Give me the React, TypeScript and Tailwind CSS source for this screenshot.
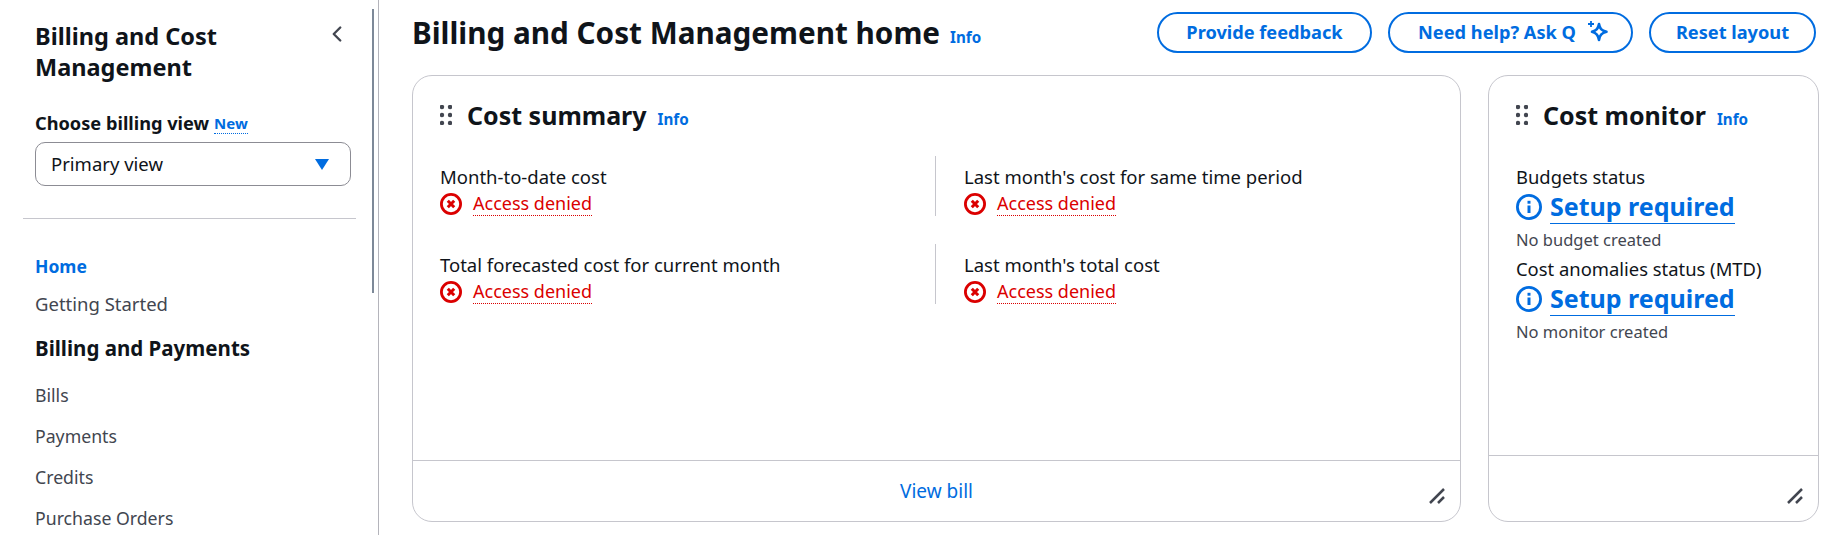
import { ChevronLeft } from "lucide-react";

const FONT = "font-['Noto_Sans','Open_Sans',sans-serif]";

const navLinks = ["Bills", "Payments", "Credits", "Purchase Orders"];

function ErrorIcon() {
    return (
        <svg viewBox="0 0 22 22" className="w-[22px] h-[22px] shrink-0" fill="none" stroke="#db0000">
            <circle cx="11" cy="11" r="9.600" strokeWidth="2.800" />
            <path d="M7.800 7.800l6.400 6.400M14.200 7.800l-6.400 6.400" strokeWidth="3" />
        </svg>
    );
}

function InfoIcon() {
    return (
        <svg viewBox="0 0 26 26" className="w-[26px] h-[26px] shrink-0" fill="none" stroke="#006ce0">
            <circle cx="13" cy="13" r="11.600" strokeWidth="2.800" />
            <path d="M13 11.500v7.500" strokeWidth="3" />
            <path d="M13 6.800v2.900" strokeWidth="3" />
        </svg>
    );
}

function Sparkle() {
    return (
        <svg viewBox="0 0 22 22" className="w-[22px] h-[22px] shrink-0 -mt-[2px]" fill="none" stroke="#006ce0" strokeWidth="2.600" strokeLinejoin="round">
            <path d="M12 3c.8 4.700 2.300 6.300 7.500 7.800-5.200 1.500-6.700 3.100-7.500 8.200-.9-5.100-2.400-6.700-7-8.200 4.600-1.500 6.100-3.100 7-7.800z" />
            <path d="M4 0v6M1 3h6" strokeWidth="1.800" />
        </svg>
    );
}

function Grip() {
    return (
        <svg viewBox="0 0 12 20" className="w-3 h-5 shrink-0" fill="#424650">
            <circle cx="2" cy="2" r="2.200" />
            <circle cx="10" cy="2" r="2.200" />
            <circle cx="2" cy="10" r="2.200" />
            <circle cx="10" cy="10" r="2.200" />
            <circle cx="2" cy="18" r="2.200" />
            <circle cx="10" cy="18" r="2.200" />
        </svg>
    );
}

function ResizeHandle() {
    return (
        <svg viewBox="0 0 16 16" className="absolute right-[15px] bottom-[17px] w-4 h-4" fill="none" stroke="#424650" strokeWidth="2.500">
            <path d="M1 15L15 1M9 15l6-6" />
        </svg>
    );
}

function Metric({ label, divider }: { label: string; divider?: boolean }) {
    return (
        <div className={divider ? "border-l border-[#c6c6cd] pl-[28px] h-[60px]" : "h-[60px]"}>
            <div className="text-[18.500px] leading-[24px] text-[#0f141a] mt-[9px]">{label}</div>
            <div className="flex items-center gap-[11px] mt-[3px] h-[24px]">
                <ErrorIcon />
                <span className="text-[18px] leading-[23px] text-[#db0000] border-b border-dotted border-[#db0000]">
                    Access denied
                </span>
            </div>
        </div>
    );
}

function Setup({ label, note }: { label: string; note: string }) {
    return (
        <div>
            <div className="text-[18.400px] leading-[24px] text-[#0f141a]">{label}</div>
            <div className="flex items-center gap-[8px] mt-[1px] h-[34px]">
                <InfoIcon />
                <span className="text-[25px] leading-[33px] font-bold text-[#006ce0] border-b border-[#006ce0]">
                    Setup required
                </span>
            </div>
            <div className="text-[16.500px] leading-[22px] text-[#424650] mt-[5px]">{note}</div>
        </div>
    );
}

function CardHeader({ title }: { title: string }) {
    return (
        <div className="flex items-center h-[34px]">
            <Grip />
            <h2 className="text-[25px] leading-[34px] font-bold text-[#0f141a] ml-[15px]">{title}</h2>
            <span className="text-[15.200px] font-bold text-[#006ce0] ml-[11px] mt-[9px]">Info</span>
        </div>
    );
}

function PillButton({ children, className }: { children: React.ReactNode; className: string }) {
    return (
        <button className={`h-[41px] rounded-full border-2 border-[#006ce0] text-[#006ce0] text-[18.200px] font-bold flex items-center justify-center gap-[11px] ${className}`}>
            {children}
        </button>
    );
}

export default function App() {
    return (
        <div className={`${FONT} flex h-[535px] w-[1831px] overflow-hidden bg-white`}>
            <aside className="relative w-[379px] shrink-0 border-r border-[#b4b4bb] pl-[23px] pr-[22px]">
                <div className="absolute right-[4px] top-[9px] w-[2px] h-[284px] bg-[#7d8998]" />
                <div className="flex justify-between pl-[12px] pr-[6px] pt-[21px]">
                    <h2 className="text-[23.500px] leading-[31px] font-bold text-[#0f141a]">
                        Billing and Cost
                        <br />
                        Management
                    </h2>
                    <ChevronLeft className="w-[26px] h-[26px] text-[#424650]" strokeWidth={2.2} />
                </div>
                <div className="pl-[12px] pr-[5px]">
                    <div className="flex items-center mt-[29px] h-[24px]">
                        <span className="text-[18.200px] font-bold text-[#0f141a]">Choose billing view</span>
                        <span className="text-[15px] font-bold text-[#006ce0] ml-[5px] border-b border-dotted border-[#006ce0] leading-[19px]">
                            New
                        </span>
                    </div>
                    <div className="flex items-center justify-between h-[44px] mt-[6px] pl-[15px] pr-[21px] rounded-[10px] border border-[#8c8c94]">
                        <span className="text-[18.500px] text-[#0f141a]">Primary view</span>
                        <span className="w-0 h-0 border-l-[7px] border-r-[7px] border-t-[11px] border-l-transparent border-r-transparent border-t-[#006ce0]" />
                    </div>
                </div>
                <div className="border-t border-[#c6c6cd] mt-[32px]" />
                <nav className="pl-[12px] pt-[35px]">
                    <div className="text-[17.500px] leading-[24px] font-bold text-[#006ce0]">Home</div>
                    <div className="text-[18.500px] leading-[24px] text-[#424650] mt-[14px]">Getting Started</div>
                    <div className="text-[20.500px] leading-[26px] font-bold text-[#0f141a] mt-[19px]">Billing and Payments</div>
                    <div className="flex flex-col gap-[17px] mt-[22px]">
                        {navLinks.map((link) => (
                            <div key={link} className="text-[17.700px] leading-[24px] text-[#424650]">{link}</div>
                        ))}
                    </div>
                </nav>
            </aside>
            <main className="flex-1 pl-[33px] pr-[13px] pt-[12px]">
                <div className="flex items-center h-[41px]">
                    <h1 className="text-[29.700px] leading-[41px] font-bold text-[#0f141a]">Billing and Cost Management home</h1>
                    <span className="text-[15.200px] font-bold text-[#006ce0] ml-[10px] mt-[9px]">Info</span>
                    <div className="flex gap-[16px] ml-auto mr-[3px]">
                        <PillButton className="w-[215px]">Provide feedback</PillButton>
                        <PillButton className="w-[245px] pl-[6px]">
                            Need help? Ask Q
                            <Sparkle />
                        </PillButton>
                        <PillButton className="w-[167px]">Reset layout</PillButton>
                    </div>
                </div>
                <div className="flex gap-[27px] mt-[22px]">
                    <section className="relative w-[1049px] h-[447px] rounded-[20px] border border-[#c6c6cd] flex flex-col">
                        <div className="flex-1 pl-[27px] pt-[22px]">
                            <CardHeader title="Cost summary" />
                            <div className="grid grid-cols-[495px_1fr] gap-y-[28px] mt-[24px]">
                                <Metric label="Month-to-date cost" />
                                <Metric label="Last month's cost for same time period" divider />
                                <Metric label="Total forecasted cost for current month" />
                                <Metric label="Last month's total cost" divider />
                            </div>
                        </div>
                        <div className="h-[61px] border-t border-[#c6c6cd] flex items-center justify-center text-[19px] text-[#006ce0]">
                            View bill
                        </div>
                        <ResizeHandle />
                    </section>
                    <section className="relative w-[331px] h-[447px] rounded-[20px] border border-[#c6c6cd] flex flex-col">
                        <div className="flex-1 pl-[27px] pt-[22px]">
                            <CardHeader title="Cost monitor" />
                            <div className="flex flex-col gap-[6px] mt-[33px]">
                                <Setup label="Budgets status" note="No budget created" />
                                <Setup label="Cost anomalies status (MTD)" note="No monitor created" />
                            </div>
                        </div>
                        <div className="h-[66px] border-t border-[#c6c6cd]" />
                        <ResizeHandle />
                    </section>
                </div>
            </main>
        </div>
    );
}
